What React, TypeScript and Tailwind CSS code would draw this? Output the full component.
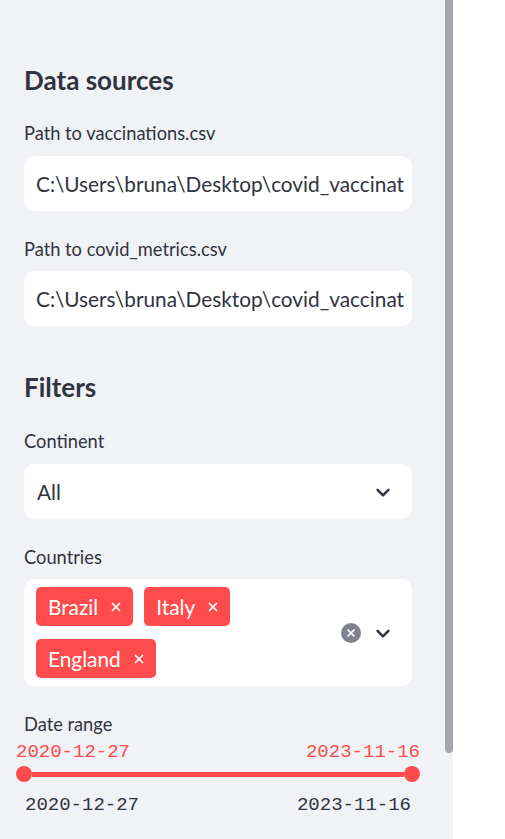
import { X } from "lucide-react";

const sans = "font-['Source_Sans_Pro','Lato','Noto_Sans',sans-serif]";
const mono = "font-['Liberation_Mono','DejaVu_Sans_Mono',monospace]";

function Chevron() {
  return (
    <svg width="20" height="20" viewBox="0 0 24 24" fill="none">
      <path d="M5.5 9.5l6.5 6.5 6.5-6.5" stroke="#31333f" strokeWidth="3" strokeLinecap="round" strokeLinejoin="round" />
    </svg>
  );
}

function Label({ text, className = "" }: { text: string; className?: string }) {
  return <div className={`text-[18.3px] leading-6 text-[#31333f] ${className}`}>{text}</div>;
}

function TextInput({ value, className = "" }: { value: string; className?: string }) {
  return (
    <div className={`h-[55px] rounded-[10px] bg-white flex items-center px-3 overflow-hidden whitespace-nowrap ${className}`}>
      <span className="text-[20.8px] text-[#31333f]">{value}</span>
    </div>
  );
}

function Tag({ name }: { name: string }) {
  return (
    <div className="h-[39px] rounded-[5px] bg-[#ff4b4b] flex items-center pl-3 pr-[10px] gap-[11px] text-white text-[20.8px]">
      <span>{name}</span>
      <X size={14} strokeWidth={3} />
    </div>
  );
}

export default function App() {
  return (
    <div className={`flex w-[505px] h-[839px] bg-white ${sans}`}>
      <div className="flex w-[453px] h-full bg-[#f0f2f6]">
        <div className="flex flex-col w-[445px] pl-6 pr-[33px] pt-[62px]">
          <h2 className="text-[26px] leading-9 font-bold text-[#31333f]">Data sources</h2>

          <Label text="Path to vaccinations.csv" className="mt-[23px]" />
          <TextInput value="C:\Users\bruna\Desktop\covid_vaccinat" className="mt-[11px]" />

          <Label text="Path to covid_metrics.csv" className="mt-[26px]" />
          <TextInput value="C:\Users\bruna\Desktop\covid_vaccinat" className="mt-[10px]" />

          <h2 className="mt-[43px] text-[26px] leading-9 font-bold text-[#31333f]">Filters</h2>

          <Label text="Continent" className="mt-[24px]" />
          <div className="mt-[11px] h-[55px] rounded-[10px] bg-white flex items-center justify-between pl-[13px] pr-[19px]">
            <span className="text-[20.8px] text-[#31333f]">All</span>
            <Chevron />
          </div>

          <Label text="Countries" className="mt-[26px]" />
          <div className="mt-[10px] h-[107px] rounded-[10px] bg-white flex items-center pl-3 pr-[19px] py-2">
            <div className="flex-1 flex flex-wrap gap-x-[11px] gap-y-[13px] pr-20">
              <Tag name="Brazil" />
              <Tag name="Italy" />
              <Tag name="England" />
            </div>
            <div className="flex items-center gap-[12px]">
              <div className="w-5 h-5 rounded-full bg-[#7f818d] flex items-center justify-center">
                <X size={12} strokeWidth={3.5} color="#ffffff" />
              </div>
              <Chevron />
            </div>
          </div>

          <Label text="Date range" className="mt-[26px]" />
          <div className={`mt-1 -mx-2 flex justify-between text-[19px] leading-6 text-[#ff4b4b] ${mono}`}>
            <span>2020-12-27</span>
            <span>2023-11-16</span>
          </div>
          <div className="-mx-2 mt-[2px] flex items-center">
            <div className="w-4 h-4 rounded-full bg-[#ff4b4b]" />
            <div className="flex-1 h-[5px] bg-[#ff4b4b]" />
            <div className="w-4 h-4 rounded-full bg-[#ff4b4b]" />
          </div>
          <div className={`mt-[11px] flex justify-between text-[19px] leading-6 text-[#31333f] ${mono}`}>
            <span className="pl-px">2020-12-27</span>
            <span className="pr-px">2023-11-16</span>
          </div>
        </div>
        <div className="w-2 h-[753px] bg-[#a6a6ae] rounded-b" />
      </div>
    </div>
  );
}
